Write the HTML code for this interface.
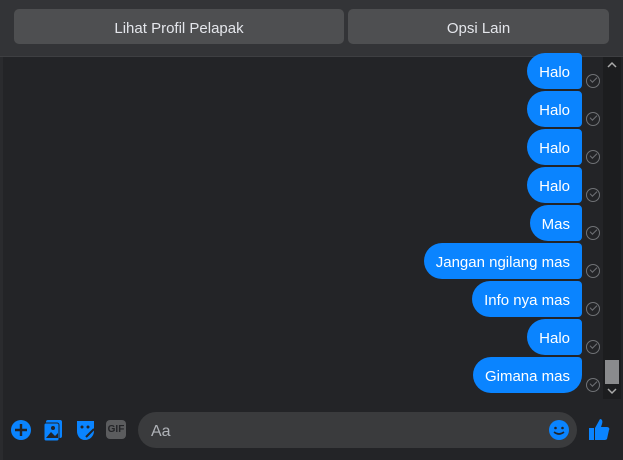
<!DOCTYPE html>
<html><head><style>
body{margin:0;width:623px;height:460px;background:#232427;font-family:"Liberation Sans",sans-serif;position:relative;overflow:hidden}
.top{position:absolute;left:0;top:0;width:623px;height:56px;background:#333437;border-bottom:1px solid #3e3f42}
.btn{position:absolute;top:9px;height:35px;background:#4e4f51;border-radius:5px;color:#e4e6eb;font-size:15px;line-height:39px;text-align:center}
.b{position:absolute;right:41px;height:36px;background:#0a84ff;color:#fff;font-size:15px;line-height:40px;padding:0 12px;border-radius:18px 4px 4px 18px}
.c{position:absolute;left:586px;width:12px;height:12px;border:1.3px solid #707276;border-radius:50%}
.c:after{content:"";position:absolute;left:3px;top:2px;width:6px;height:3px;border-left:1.3px solid #707276;border-bottom:1.3px solid #707276;transform:rotate(-45deg)}
.sb{position:absolute;left:603px;top:57px;width:18px;height:342px;background:#1c1d1f}
.in{position:absolute;left:138px;top:412px;width:439px;height:36px;background:#3a3b3d;border-radius:18px;color:#b0b3b8;font-size:16px;line-height:39px;text-indent:13px}
</style></head><body>
<div style="position:absolute;left:0;top:0;width:3px;height:460px;background:#2a2b2e"></div>
<div class="top">
<div class="btn" style="left:14px;width:330px">Lihat Profil Pelapak</div>
<div class="btn" style="left:348px;width:261px">Opsi Lain</div>
</div>
<div class="b" style="top:53px">Halo</div><div class="c" style="top:74px"></div>
<div class="b" style="top:91px">Halo</div><div class="c" style="top:112px"></div>
<div class="b" style="top:129px">Halo</div><div class="c" style="top:150px"></div>
<div class="b" style="top:167px">Halo</div><div class="c" style="top:188px"></div>
<div class="b" style="top:205px">Mas</div><div class="c" style="top:226px"></div>
<div class="b" style="top:243px">Jangan ngilang mas</div><div class="c" style="top:264px"></div>
<div class="b" style="top:281px">Info nya mas</div><div class="c" style="top:302px"></div>
<div class="b" style="top:319px">Halo</div><div class="c" style="top:340px"></div>
<div class="b" style="top:357px;border-radius:18px 4px 18px 18px">Gimana mas</div><div class="c" style="top:378px"></div>
<div class="sb"><div style="position:absolute;left:2px;top:303px;width:14px;height:24px;background:#8a8b8d"></div>
<svg style="position:absolute;left:4px;top:4px" width="10" height="8"><path d="M1 6l4-4 4 4" stroke="#aaa" stroke-width="1.5" fill="none"/></svg>
<svg style="position:absolute;left:4px;top:330px" width="10" height="8"><path d="M1 2l4 4 4-4" stroke="#aaa" stroke-width="1.5" fill="none"/></svg></div>
<svg style="position:absolute;left:10px;top:419px" width="22" height="22"><circle cx="11" cy="11" r="10" fill="#0a84ff"/><path d="M11 5v12M5 11h12" stroke="#232427" stroke-width="2.4"/></svg>
<svg style="position:absolute;left:43px;top:419px" width="20" height="22"><rect x="3" y="1" width="16" height="18" rx="2" fill="#0a84ff"/><rect x="1" y="4" width="15" height="18" rx="2" fill="#0a84ff" stroke="#232427"/><circle cx="10" cy="9" r="2" fill="#232427"/><path d="M3 19l5-6 4 4 3-3v5z" fill="#232427"/></svg>
<svg style="position:absolute;left:76px;top:419px" width="20" height="22"><path d="M1 2h17v10c0 5-4 9-9 9s-8-4-8-9z" fill="#0a84ff"/><circle cx="6" cy="8" r="1.5" fill="#232427"/><circle cx="12" cy="8" r="1.5" fill="#232427"/><path d="M10 18l8-8" stroke="#232427" stroke-width="2"/></svg>
<div style="position:absolute;left:106px;top:420px;width:20px;height:19px;background:#5b5c5e;border-radius:4px;color:#232427;font-size:10px;font-weight:bold;line-height:19px;text-align:center">GIF</div>
<div class="in">Aa</div>
<svg style="position:absolute;left:548px;top:419px" width="22" height="22"><circle cx="11" cy="11" r="10" fill="#0a84ff"/><circle cx="7.5" cy="9" r="1.3" fill="#232427"/><circle cx="14.5" cy="9" r="1.3" fill="#232427"/><path d="M6 13q5 4 10 0" stroke="#232427" stroke-width="1.6" fill="none"/></svg>
<svg style="position:absolute;left:588px;top:418px" width="22" height="24"><rect x="1" y="10" width="5" height="12" fill="#0a84ff"/><path d="M7 10l5-9c2 0 3 2 2 5l-1 3h6c2 0 3 2 2 3l-2 9c-1 1-2 1-3 1H7z" fill="#0a84ff"/></svg>
</body></html>
